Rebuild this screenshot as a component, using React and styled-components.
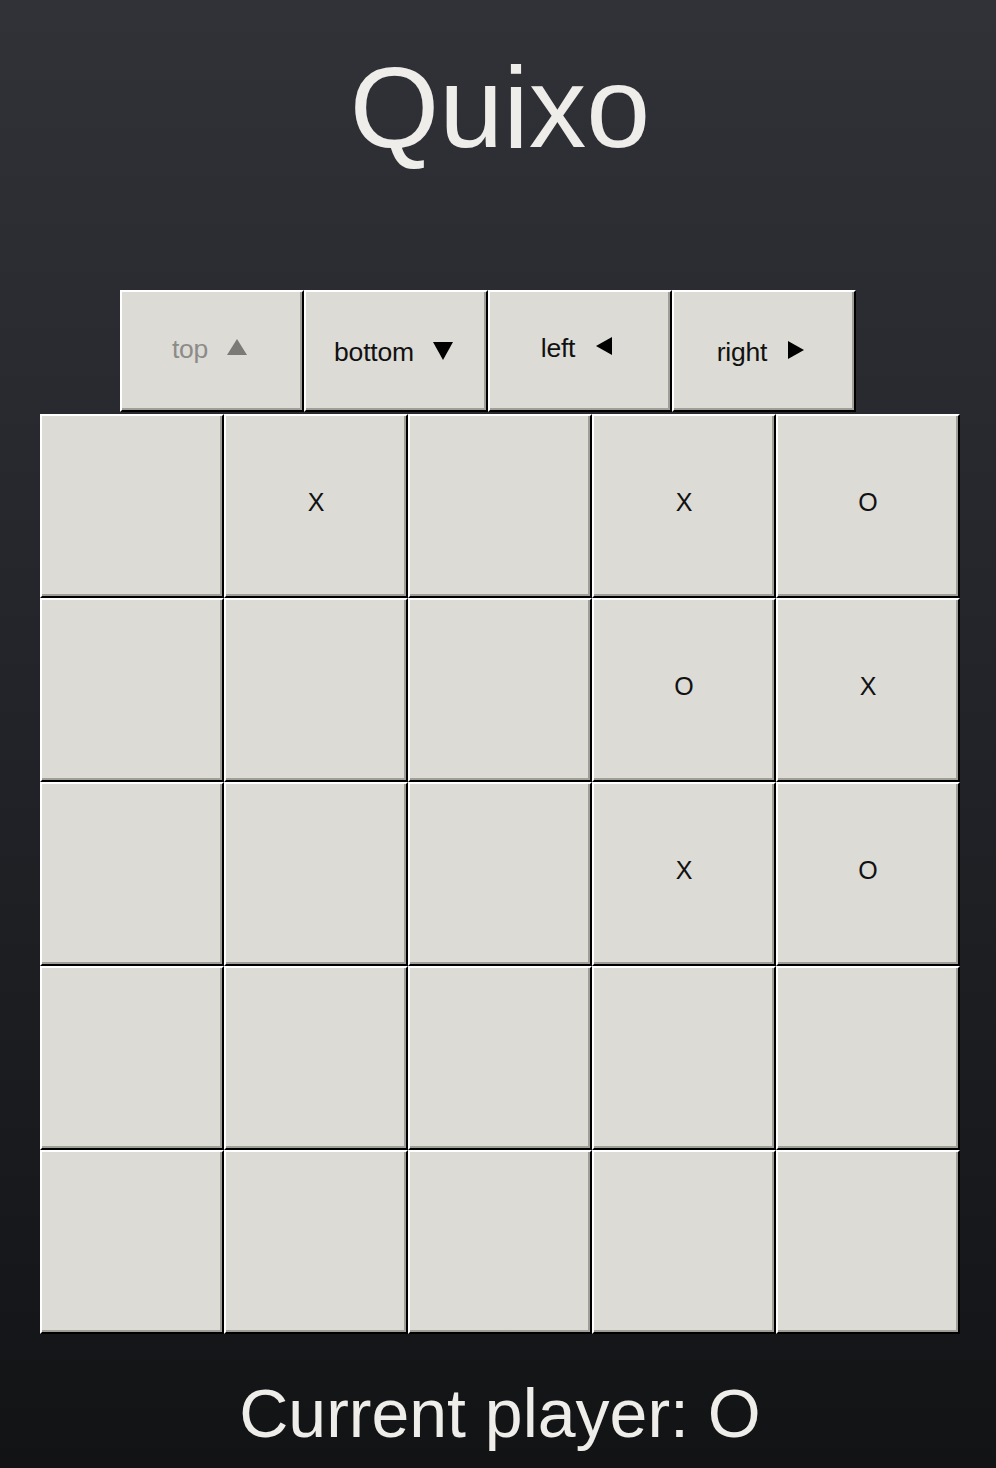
import styled, { createGlobalStyle } from "styled-components";

const GlobalStyle = createGlobalStyle`
  html, body {
    margin: 0;
    padding: 0;
  }
  body {
    min-height: 1468px;
    background: linear-gradient(to bottom, #303238 0%, #222328 50%, #121315 100%);
    font-family: "Liberation Sans", Arial, sans-serif;
  }
`;

const Page = styled.div`
  width: 920px;
  margin-left: 40px;
  display: flex;
  flex-direction: column;
  align-items: center;
`;

const Title = styled.h1`
  margin: 50px 0 0;
  font-size: 115px;
  line-height: 1;
  font-weight: 400;
  color: #efede9;
`;

const Controls = styled.div`
  align-self: stretch;
  display: flex;
  padding-left: 80px;
  margin-top: 125px;
  margin-bottom: 2px;
`;

const cellBorder = `
  box-sizing: border-box;
  width: 184px;
  background: #dcdbd6;
  border-style: solid;
  border-width: 2px;
  border-color: #ffffff #000000 #000000 #ffffff;
  box-shadow: inset -2px -2px 0 #a19e97;
`;

const MoveButton = styled.button`
  ${cellBorder}
  height: 122px;
  display: flex;
  align-items: center;
  justify-content: center;
  gap: 18px;
  padding: 0 4px 0 0;
  font-family: "Liberation Sans", Arial, sans-serif;
  font-size: 26.5px;
  letter-spacing: -0.2px;
  color: ${(p) => (p.disabled ? "#8c8b88" : "#111111")};
  cursor: ${(p) => (p.disabled ? "default" : "pointer")};
`;

const Label = styled.span`
  position: relative;
  top: ${(p) => p.$shift}px;
`;

const Arrow = styled.svg`
  width: 22px;
  height: 20px;
  fill: ${(p) => (p.$muted ? "#7b7a77" : "#000000")};
  position: relative;
  top: ${(p) => p.$shift}px;
`;

const Board = styled.div`
  display: grid;
  grid-template-columns: repeat(5, 184px);
  grid-auto-rows: 184px;
`;

const Cell = styled.div`
  ${cellBorder}
  height: 184px;
  display: flex;
  align-items: center;
  justify-content: center;
  padding-bottom: 8px;
  font-size: 25px;
  color: #111111;
`;

const Status = styled.p`
  margin: 45px 0 0;
  font-size: 68px;
  line-height: 1;
  color: #efede9;
`;

const arrowPaths = {
  up: "M11 2 L21 18 L1 18 Z",
  down: "M1 2 L21 2 L11 20 Z",
  left: "M3 10 L19 1 L19 19 Z",
  right: "M3 1 L19 10 L3 19 Z",
};

const moves = [
  { label: "top", dir: "up", disabled: true, shift: -2 },
  { label: "bottom", dir: "down", shift: 1 },
  { label: "left", dir: "left", shift: -3 },
  { label: "right", dir: "right", shift: 1 },
];

const board = [
  ["", "X", "", "X", "O"],
  ["", "", "", "O", "X"],
  ["", "", "", "X", "O"],
  ["", "", "", "", ""],
  ["", "", "", "", ""],
];

export default function App() {
  return (
    <>
      <GlobalStyle />
      <Page>
        <Title>Quixo</Title>
        <Controls>
          {moves.map((m) => (
            <MoveButton key={m.label} disabled={m.disabled}>
              <Label $shift={m.shift}>{m.label}</Label>
              <Arrow viewBox="0 0 22 20" $muted={m.disabled} $shift={m.shift - 2}>
                <path d={arrowPaths[m.dir]} />
              </Arrow>
            </MoveButton>
          ))}
        </Controls>
        <Board>
          {board.flat().map((v, i) => (
            <Cell key={i}>{v}</Cell>
          ))}
        </Board>
        <Status>Current player: O</Status>
      </Page>
    </>
  );
}
